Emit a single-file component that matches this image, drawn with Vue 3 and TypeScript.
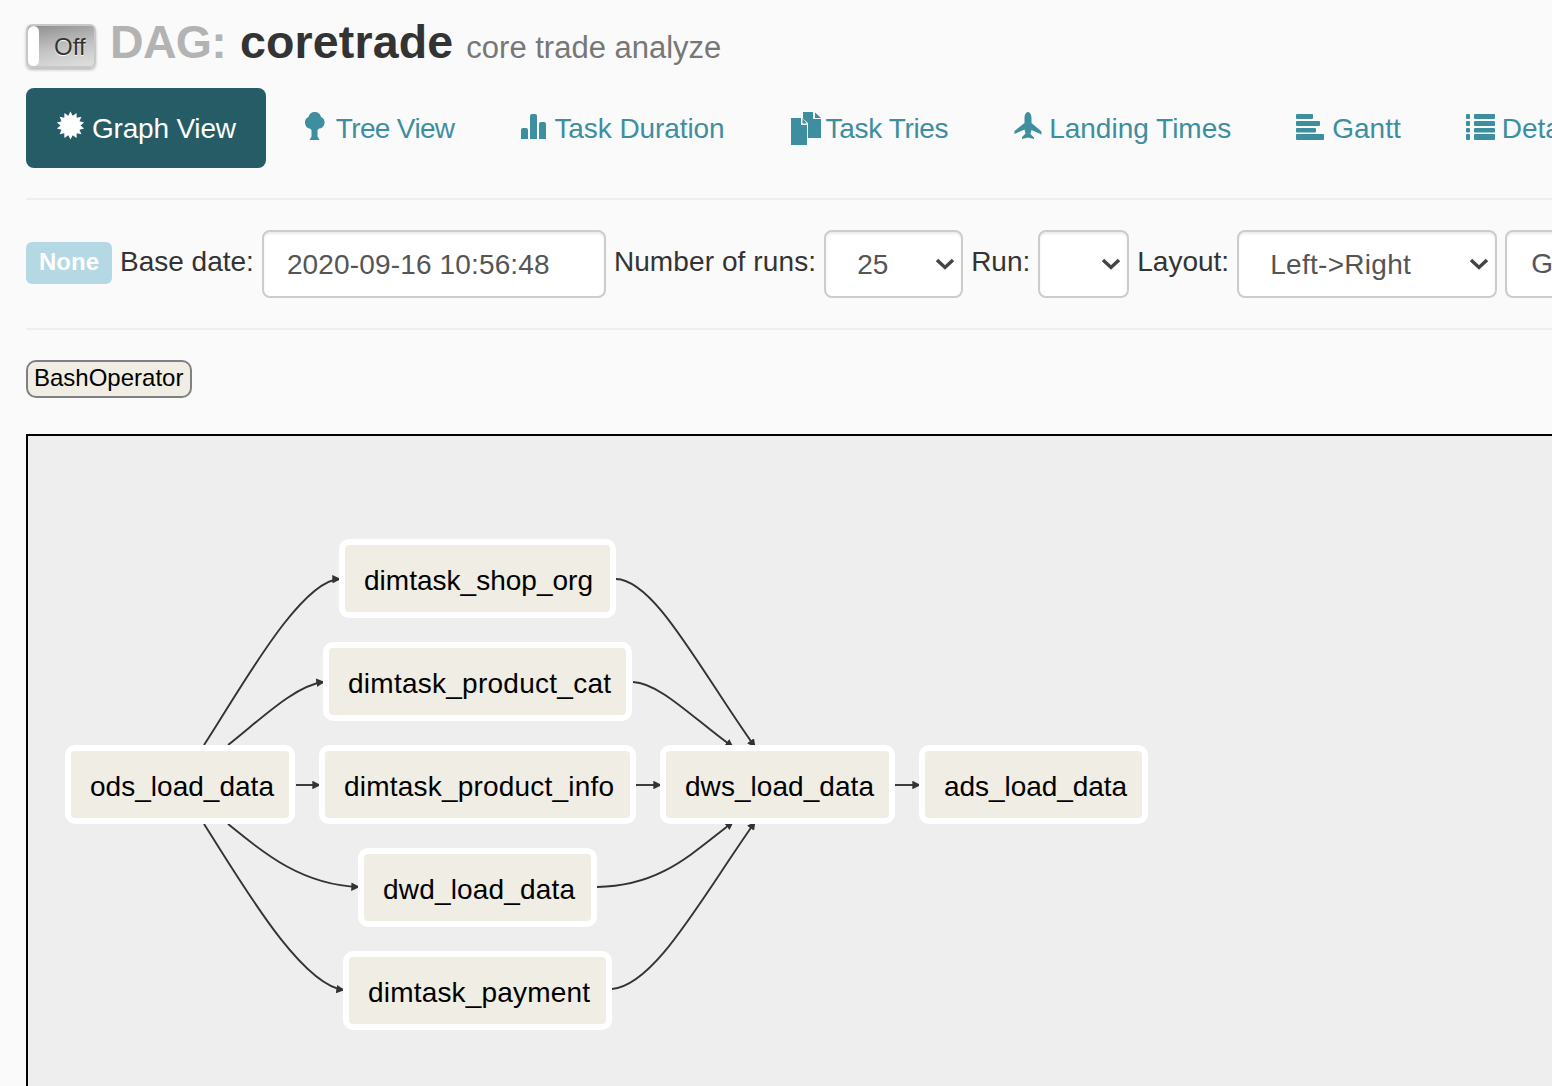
<template>
  <div class="page">
    <h1 class="title">
      <span class="toggle"><span class="toggle-handle"></span><span class="toggle-label">Off</span></span>
      <span class="title-prefix">DAG:</span>
      <span class="title-name">coretrade</span>
      <small class="title-desc">core trade analyze</small>
    </h1>

    <ul class="tabs">
      <li v-for="tab in tabs" :key="tab.label" class="tab" :class="[tab.cls, { active: tab.active }]">
        <svg class="tab-icon" :width="tab.w" height="36" :viewBox="`0 0 ${tab.w} 36`" v-html="tab.icon"></svg>
        <span class="tab-label">{{ tab.label }}</span>
      </li>
    </ul>

    <hr class="rule">

    <form class="filters" @submit.prevent>
      <span class="state-badge">None</span>
      <label class="field-label">Base date:</label>
      <input class="control date-input" value="2020-09-16 10:56:48">
      <label class="field-label runs-label">Number of runs:</label>
      <select class="control select runs">
        <option>25</option>
      </select>
      <label class="field-label">Run:</label>
      <select class="control select run"></select>
      <label class="field-label">Layout:</label>
      <select class="control select layout">
        <option>Left-&gt;Right</option>
      </select>
      <button class="control go" type="button">Go</button>
    </form>

    <hr class="rule second">

    <div class="legend"><span class="legend-item">BashOperator</span></div>

    <div class="graph">
      <svg class="graph-svg" width="1526" height="652" viewBox="26 434 1526 652">
        <defs>
          <marker id="arrow" viewBox="0 0 10 10" refX="9" refY="5" markerWidth="4.500" markerHeight="4.500" orient="auto">
            <path d="M0 0 L10 5 L0 10 z" fill="#333" />
          </marker>
        </defs>
        <path
          v-for="(d, i) in edges"
          :key="i"
          :d="d"
          class="edge"
          marker-end="url(#arrow)"
        />
        <g v-for="node in nodes" :key="node.name">
          <rect
            class="node-box"
            :x="node.x + 3"
            :y="node.y + 3"
            :width="node.w - 6"
            height="73"
            rx="7"
          />
          <text class="node-text" :x="node.x + 25" :y="node.y + 51" :textLength="node.tw">{{ node.name }}</text>
        </g>
      </svg>
    </div>
  </div>
</template>

<script setup lang="ts">
const certificate = (() => {
  const pts: string[] = []
  const n = 14
  for (let i = 0; i < n * 2; i += 1) {
    const r = i % 2 === 0 ? 14 : 10
    const a = (Math.PI * i) / n
    pts.push(`${(14.500 + r * Math.sin(a)).toFixed(1)},${(15.500 - r * Math.cos(a)).toFixed(1)}`)
  }
  return `<polygon points="${pts.join(' ')}" fill="currentColor"/>`
})()

const tabs = [
  { label: 'Graph View', cls: 'tab-graph', active: true, w: 36, icon: certificate },
  {
    label: 'Tree View',
    cls: 'tab-tree',
    active: false,
    w: 34,
    icon: '<path d="M12.500 2c3.500 0 6 2 6.500 5 2.500 1 4 3.500 3.500 6.500-.5 3-3 5-5.500 5-1 1-1.500 1.500-1.500 1.500v6.500l2 3.500H7.500l2-3.500V20s-.5-.5-1.500-1.500c-2.500 0-4.500-2-5-5-.5-3 1-5.500 3.500-6.500.5-3 3-5 6-5z" fill="currentColor"/>'
  },
  {
    label: 'Task Duration',
    cls: 'tab-duration',
    active: false,
    w: 34,
    icon: '<path d="M1 20a2 2 0 0 1 2-2h3a2 2 0 0 1 2 2v9H1zM10 6a2 2 0 0 1 2-2h3a2 2 0 0 1 2 2v23h-7zM19 14a2 2 0 0 1 2-2h3a2 2 0 0 1 2 2v15h-7z" fill="currentColor"/>'
  },
  {
    label: 'Task Tries',
    cls: 'tab-tries',
    active: false,
    w: 35,
    icon: '<path d="M12 2h10v7h8v19H12z" fill="currentColor"/><path d="M24 2.500l6 5.500h-6z" fill="currentColor"/><path d="M-1 7h11l7 6v22H-1z" fill="#fafafa"/><path d="M0 8h10v7h6v20H0z" fill="currentColor"/><path d="M11.500 8.500l4.500 5h-4.500z" fill="currentColor"/>'
  },
  {
    label: 'Landing Times',
    cls: '',
    active: false,
    w: 35,
    icon: '<path d="M14 2c2 0 3.500 3 3.500 6v5l10 8.500v3l-10-4.500-1 4 3.500 3.500v1.500l-6-1.500-6 1.500V27l3.500-3.500-1-4L.5 24v-3l10-8V8c0-3 1.500-6 3.500-6z" fill="currentColor"/>'
  },
  {
    label: 'Gantt',
    cls: '',
    active: false,
    w: 35,
    icon: '<g fill="currentColor"><rect x="-1" y="4" width="17" height="5" rx="1"/><rect x="-1" y="11" width="24" height="5" rx="1"/><rect x="-1" y="18" width="20" height="4.500" rx="1"/><rect x="-1" y="24" width="28" height="6" rx="1"/></g>'
  },
  {
    label: 'Details',
    cls: '',
    active: false,
    w: 35,
    icon: '<g fill="currentColor"><rect x="-1" y="4" width="4" height="5" rx="1"/><rect x="7" y="4" width="21" height="5" rx="1"/><rect x="-1" y="11" width="4" height="5" rx="1"/><rect x="7" y="11" width="21" height="5" rx="1"/><rect x="-1" y="18" width="4" height="4.500" rx="1"/><rect x="7" y="18" width="21" height="4.500" rx="1"/><rect x="-1" y="24" width="4" height="6" rx="1"/><rect x="7" y="24" width="21" height="6" rx="1"/></g>'
  }
]

const nodes = [
  { name: 'ods_load_data', x: 65, y: 745, w: 230, tw: 184 },
  { name: 'dimtask_shop_org', x: 339, y: 539, w: 277, tw: 229 },
  { name: 'dimtask_product_cat', x: 323, y: 642, w: 309, tw: 263 },
  { name: 'dimtask_product_info', x: 319, y: 745, w: 317, tw: 270 },
  { name: 'dwd_load_data', x: 358, y: 848, w: 239, tw: 192 },
  { name: 'dimtask_payment', x: 343, y: 951, w: 269, tw: 222 },
  { name: 'dws_load_data', x: 660, y: 745, w: 235, tw: 189 },
  { name: 'ads_load_data', x: 919, y: 745, w: 229, tw: 183 }
]

const edges = [
  'M204 745C240 690 300 580 340 579',
  'M228 745C260 720 295 685 324 682',
  'M296 785H320',
  'M616 579C655 580 700 670 755 747',
  'M633 682C660 683 695 720 733 747',
  'M636 785H661',
  'M895 785H920',
  'M228 824C260 850 300 885 359 887',
  'M204 824C240 880 300 985 344 990',
  'M597 887C660 886 690 855 733 822',
  'M612 989C655 985 700 900 755 822'
]
</script>

<style>
html,
body {
  margin: 0;
  background: #fafafa;
  overflow: hidden;
}
</style>

<style scoped>
.page {
  box-sizing: border-box;
  height: 1086px;
  width: 1552px;
  overflow: hidden;
  padding: 0 0 0 26px;
  background: #fafafa;
  font-family: 'Liberation Sans', Arial, sans-serif;
  color: #333;
}

.title {
  display: flex;
  align-items: baseline;
  margin: 0;
  height: 88px;
  box-sizing: border-box;
  padding-top: 16px;
  font-size: 46.5px;
  line-height: 52px;
  font-weight: 700;
  white-space: nowrap;
}

.toggle {
  position: relative;
  box-sizing: border-box;
  align-self: flex-start;
  display: block;
  flex: none;
  width: 70px;
  height: 44px;
  margin: 8px 14px 0 0;
  border: 2px solid #c8c8c8;
  border-radius: 6px;
  background: linear-gradient(170deg, #8f8f8f 0%, #c4c4c4 55%, #e0e0e0 100%);
  box-shadow: 0 2px 3px rgba(0, 0, 0, 0.25);
}

.toggle-handle {
  position: absolute;
  left: 0;
  top: 0;
  bottom: 0;
  width: 11px;
  background: #fff;
  border-radius: 6px;
}

.toggle-label {
  position: absolute;
  left: 26px;
  top: 7px;
  font-size: 24px;
  line-height: 28px;
  font-weight: 400;
  color: #333;
  text-shadow: 0 1px 1px #fff;
}

.title-prefix {
  color: #b3b3b3;
  letter-spacing: -0.7px;
}

.title-name {
  margin-left: 14px;
  color: #333;
  letter-spacing: 0.15px;
}

.title-desc {
  margin-left: 13px;
  font-size: 31px;
  font-weight: 400;
  color: #777;
}

.tabs {
  display: flex;
  gap: 6px;
  list-style: none;
  margin: 0;
  padding: 0;
  white-space: nowrap;
}

.tab {
  display: flex;
  align-items: center;
  flex: none;
  height: 80px;
  padding: 0 30px;
  border-radius: 8px;
  font-size: 28px;
  color: #3d8e9f;
}

.tab.active {
  background: #255c66;
  color: #fff;
}

.tab-icon {
  flex: none;
  overflow: visible;
}

.tab-label {
  margin-top: 2px;
}

.tab-graph .tab-label {
  letter-spacing: -0.2px;
}

.tab-tree .tab-label {
  letter-spacing: -0.65px;
}

.tab-duration .tab-label {
  letter-spacing: -0.08px;
}

.tab-tries .tab-label {
  letter-spacing: -0.35px;
}

.rule {
  margin: 30px 0 0;
  border: 0;
  border-top: 2px solid #eee;
}

.rule.second {
  margin-top: 30px;
}

.filters {
  display: flex;
  align-items: center;
  gap: 8px;
  margin-top: 30px;
  height: 68px;
  white-space: nowrap;
}

.state-badge {
  box-sizing: border-box;
  flex: none;
  width: 86px;
  height: 42px;
  margin-top: -2px;
  border-radius: 6px;
  background: #b5d8e5;
  color: #fff;
  font-size: 24px;
  line-height: 40px;
  font-weight: 700;
  text-align: center;
}

.field-label {
  flex: none;
  font-size: 28px;
  line-height: 40px;
  margin-top: -4px;
  color: #333;
}

.runs-label {
  letter-spacing: 0.1px;
}

.control {
  box-sizing: border-box;
  flex: none;
  height: 68px;
  border: 2px solid #ccc;
  border-radius: 8px;
  background-color: #fff;
  padding: 0 24px;
  font-family: inherit;
  font-size: 28px;
  color: #555;
  box-shadow: inset 0 2px 2px rgba(0, 0, 0, 0.075);
  outline: none;
}

.date-input {
  width: 344px;
  padding: 2px 0 0 23px;
  letter-spacing: 0.15px;
}

.select {
  appearance: none;
  -webkit-appearance: none;
  padding-left: 31px;
  background-image: url("data:image/svg+xml,%3Csvg xmlns='http://www.w3.org/2000/svg' width='20' height='12' viewBox='0 0 20 12'%3E%3Cpath d='M2 2l8 7.500 8-7.500' fill='none' stroke='%23444' stroke-width='3.400'/%3E%3C/svg%3E");
  background-repeat: no-repeat;
  background-position: right 6px center;
}

.runs {
  width: 139px;
}

.run {
  width: 91px;
}

.layout {
  width: 260px;
  letter-spacing: 0.3px;
}

.go {
  width: 120px;
  text-align: left;
}

.legend {
  margin-top: 30px;
}

.legend-item {
  display: inline-block;
  box-sizing: border-box;
  height: 38px;
  padding: 0 7px 0 6px;
  border: 2px solid #808080;
  border-radius: 10px;
  background: #f0ede4;
  color: #000;
  font-size: 24px;
  line-height: 31px;
}

.graph {
  box-sizing: border-box;
  margin-top: 36px;
  height: 652px;
  width: 1526px;
  border-top: 2px solid #000;
  border-left: 2px solid #000;
  background: #eee;
  overflow: hidden;
}

.graph-svg {
  display: block;
  margin: -2px 0 0 -2px;
}

.edge {
  fill: none;
  stroke: #333;
  stroke-width: 1.9;
}

.node-box {
  fill: #f0ede4;
  stroke: #fff;
  stroke-width: 6;
}

.node-text {
  fill: #000;
  font-size: 28px;
}
</style>
